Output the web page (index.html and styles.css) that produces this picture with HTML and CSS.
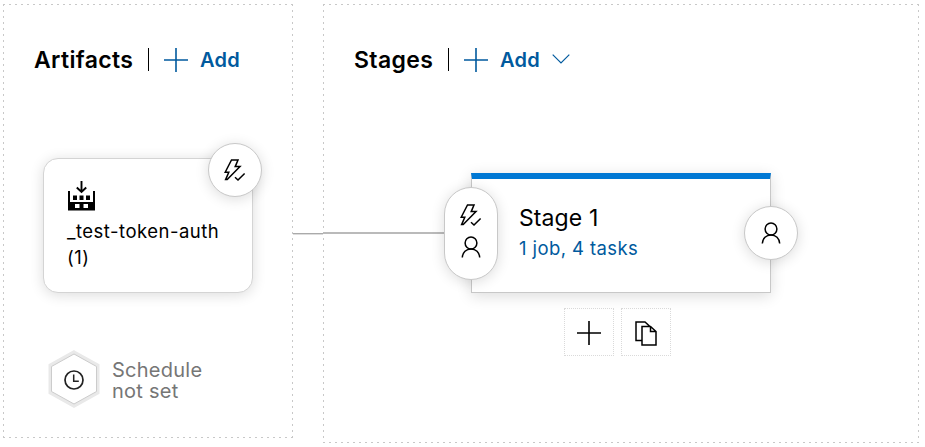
FILE: index.html
```html
<!DOCTYPE html>
<html lang="en">
<head>
<meta charset="utf-8">
<title>Release pipeline</title>
<link rel="stylesheet" href="styles.css">
</head>
<body>
<svg class="defs" aria-hidden="true">
  <symbol id="plus" viewBox="0 0 24 24"><path d="M12 0V24M0 12H24" fill="none" stroke="currentColor" stroke-width="1.6"/></symbol>
  <symbol id="bolt" viewBox="0 0 22 22"><path d="M7.500 1H14L11.200 7.600H16L3.200 20.600H1.600L4.800 13.200H1.200L7.500 1ZM11 18.200L14 21L20.600 14.500" fill="none" stroke="currentColor" stroke-width="1.5"/></symbol>
  <symbol id="person" viewBox="0 0 20 22"><circle cx="10" cy="7" r="5.9" fill="none" stroke="currentColor" stroke-width="1.5"/><path d="M1.3 21.5C1.6 16.2 5.2 12.9 10 12.9S18.4 16.2 18.7 21.5" fill="none" stroke="currentColor" stroke-width="1.5"/></symbol>
</svg>
<main class="pipeline">
  <section class="panel artifacts">
    <header class="head">
      <h2>Artifacts</h2><span class="bar"></span>
      <a class="add"><svg class="plus"><use href="#plus"/></svg>Add</a>
    </header>
    <div class="artifact">
      <svg class="build" viewBox="0 0 27 31"><path d="M13.5 1V11M8.8 7.5L13.5 12L18.2 7.5" fill="none" stroke="#000" stroke-width="1.9"/><path fill="#000" fill-rule="evenodd" d="M0 11H2V22H25V11H27V30.500H0ZM7 24V28H11.500V24ZM15.500 24V28H20V24ZM5 15.500H9V20H5ZM11.500 15.500H15.500V20H11.500ZM18 15.500H22V20H18Z"/></svg>
      <div class="source">_test-token-auth (1)</div>
      <span class="badge trigger"><svg class="bolt"><use href="#bolt"/></svg></span>
    </div>
    <div class="schedule">
      <svg class="hex" viewBox="0 0 52 58"><path d="M26 2.400L49.500 15.500V42.500L26 55.600L2.500 42.500V15.500Z" fill="#fff" stroke="#e9e9e9" stroke-width="4"/><path d="M26 4L48.500 16.500V41.500L26 54L3.500 41.500V16.500Z" fill="#fff" stroke="#ccc"/><circle cx="26" cy="30" r="9" fill="none" stroke="#222" stroke-width="1.700"/><path d="M25.700 24.500V31.200H30.800" fill="none" stroke="#222" stroke-width="1.500"/></svg>
      <div>Schedule<br>not set</div>
    </div>
  </section>
  <div class="link"></div>
  <section class="panel stages">
    <header class="head">
      <h2>Stages</h2><span class="bar"></span>
      <a class="add"><svg class="plus"><use href="#plus"/></svg>Add</a>
      <svg class="chevron" viewBox="0 0 18 10"><path d="M.7.700L9 9L17.300.700" fill="none" stroke="currentColor" stroke-width="1.200"/></svg>
    </header>
    <div class="row">
      <div class="wire"></div>
      <div class="stage">
        <div class="name">Stage 1</div>
        <a class="jobs">1 job, 4 tasks</a>
        <span class="badge pre"><svg class="bolt"><use href="#bolt"/></svg><svg class="person"><use href="#person"/></svg></span>
        <span class="badge post"><svg class="person"><use href="#person"/></svg></span>
      </div>
    </div>
    <div class="actions">
      <span class="action"><svg class="plus"><use href="#plus"/></svg></span>
      <span class="action"><svg class="copy" viewBox="0 0 22 25"><path d="M6.500 19.500H1V1H10L15.500 6M7 5.500H15.500L21 10.500V24H7ZM15.500 5.500V10.500H21" fill="none" stroke="#000" stroke-width="1.500"/></svg></span>
    </div>
  </section>
</main>
</body>
</html>
```
FILE: styles.css
```css
* { box-sizing: border-box; }
body {
  margin: 0;
  background: #fff;
  color: #000;
  font-family: Inter, "Liberation Sans", sans-serif;
  overflow: hidden;
}
svg { display: block; flex: none; }
.defs { position: absolute; width: 0; height: 0; }
.pipeline { display: flex; align-items: flex-start; padding: 4px 0 0 3px; height: 447px; }
.panel {
  --h: repeating-linear-gradient(90deg, #c8c8c8 0 2px, transparent 2px 6px);
  --v: repeating-linear-gradient(180deg, #c8c8c8 0 2px, transparent 2px 6px);
  flex: none;
  background: var(--h) top / 100% 1px no-repeat, var(--h) bottom / 100% 1px no-repeat,
    var(--v) left / 1px 100% no-repeat, var(--v) right / 1px 100% no-repeat;
}
.artifacts { width: 290px; height: 434px; padding: 41px 0 0 32px; }
.stages { width: 596px; height: 439px; padding-top: 41px; }
.head { display: flex; align-items: center; height: 29px; }
.stages .head { padding-left: 32px; }
h2 { margin: 0 0 0 -1px; width: 99px; font-size: 23px; font-weight: 600; white-space: nowrap; letter-spacing: .35px; }
.stages h2 { width: 79px; }
.bar { width: 1px; height: 23px; margin: 0 15px; background: #000; }
.plus { width: 24px; height: 24px; }
.add { display: flex; align-items: center; gap: 12px; color: #005a9e; font-size: 20px; font-weight: 600; letter-spacing: .3px; }
.chevron { width: 18px; height: 10px; margin: -1px 0 0 12px; color: #005a9e; }
.artifact {
  position: relative;
  width: 210px;
  height: 135px;
  margin: 84px 0 0 8px;
  padding: 22px 20px 0 23px;
  border: 1px solid #d4d4d4;
  border-radius: 15px;
  background: #fff;
  box-shadow: 0 2px 14px rgba(0, 0, 0, .14);
  font-size: 18.5px;
  line-height: 26px;
  letter-spacing: .5px;
}
.build { width: 27px; height: 31px; margin: -1px 0 7px 1px; }
.badge {
  position: absolute;
  display: flex;
  flex-direction: column;
  align-items: center;
  justify-content: center;
  width: 54px;
  height: 54px;
  border: 1px solid #c8c8c8;
  border-radius: 27px;
  background: #fff;
  box-shadow: 0 2px 14px rgba(0, 0, 0, .14);
}
.trigger { top: -16px; right: -10px; }
.bolt { width: 22px; height: 22px; }
.person { width: 20px; height: 22px; }
.schedule { display: flex; gap: 12px; margin: 57px 0 0 13px; color: #767676; font-size: 20px; line-height: 21px; letter-spacing: .25px; }
.schedule div { padding-top: 10px; }
.hex { width: 52px; height: 58px; }
.link { width: 30px; height: 1px; margin-top: 229px; background: #aaa; box-shadow: 0 1px #ddd; }
.row { display: flex; margin-top: 99px; }
.wire { width: 148px; height: 2px; margin-top: 59px; background: #bababa; }
.stage {
  position: relative;
  width: 300px;
  height: 120px;
  padding: 31px 0 0 47px;
  border: 1px solid #c8c8c8;
  border-top: 6px solid #0078d4;
  background: #fff;
  box-shadow: 0 3px 14px rgba(0, 0, 0, .14);
}
.name { margin-top: -6px; font-size: 23px; line-height: 28px; letter-spacing: .1px; }
.jobs { display: block; color: #005a9e; font-size: 18.5px; line-height: 24px; margin-top: 4px; letter-spacing: .4px; }
.pre { left: -28px; top: 8px; height: 93px; gap: 10px; padding-bottom: 6px; }
.post { right: -28px; top: 27px; }
.actions { display: flex; gap: 7px; margin: 15px 0 0 241px; }
.action { display: flex; align-items: center; justify-content: center; width: 50px; height: 48px; border: 1px dotted #dadada; }
.action svg { margin-top: 2px; }
.copy { width: 22px; height: 25px; }
```
